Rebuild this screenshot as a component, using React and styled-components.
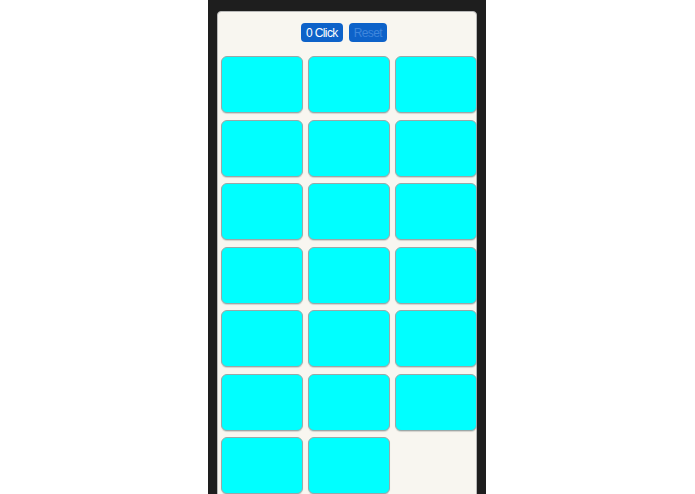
import styled, { createGlobalStyle } from 'styled-components';

const Global = createGlobalStyle`
    body {
        margin: 0;
        background: #ffffff;
        font-family: 'Liberation Sans', Arial, sans-serif;
        overflow: hidden;
    }
`;

const Page = styled.div`
    display: flex;
    justify-content: center;
    padding-right: 1px;
`;

const Frame = styled.div`
    width: 260px;
    min-height: 520px;
    background: #1e1e1e;
    padding: 11px 9px 0 9px;
`;

const Card = styled.div`
    background: #f8f6f0;
    border: 1px solid #b8b8b8;
    border-radius: 4px;
    min-height: 520px;
    padding: 11px 0 0 3px;
`;

const Toolbar = styled.div`
    display: flex;
    justify-content: center;
    gap: 6px;
    margin-bottom: 14px;
    padding-right: 9px;
`;

const Button = styled.button`
    height: 19px;
    padding: 0 5px;
    border: none;
    border-radius: 4px;
    background: #0d62c9;
    color: ${p => (p.disabled ? '#3f86dc' : '#ffffff')};
    font-family: 'Liberation Sans', Arial, sans-serif;
    font-size: 12px;
    letter-spacing: -0.6px;
    cursor: pointer;
`;

const Grid = styled.div`
    display: grid;
    grid-template-columns: repeat(3, 82px);
    grid-auto-rows: 57px;
    column-gap: 5px;
    row-gap: 6.5px;
`;

const Tile = styled.div`
    background: #00ffff;
    border: 1px solid #9aa8a8;
    border-radius: 6px;
    box-shadow: 0 1px 1px rgba(0, 0, 0, 0.15);
`;

export default function App() {
    const tiles = Array.from({ length: 20 }, (_, i) => i);
    return (
        <Page>
            <Global />
            <Frame>
                <Card>
                    <Toolbar>
                        <Button>0 Click</Button>
                        <Button disabled>Reset</Button>
                    </Toolbar>
                    <Grid>
                        {tiles.map(i => (
                            <Tile key={i} />
                        ))}
                    </Grid>
                </Card>
            </Frame>
        </Page>
    );
}
